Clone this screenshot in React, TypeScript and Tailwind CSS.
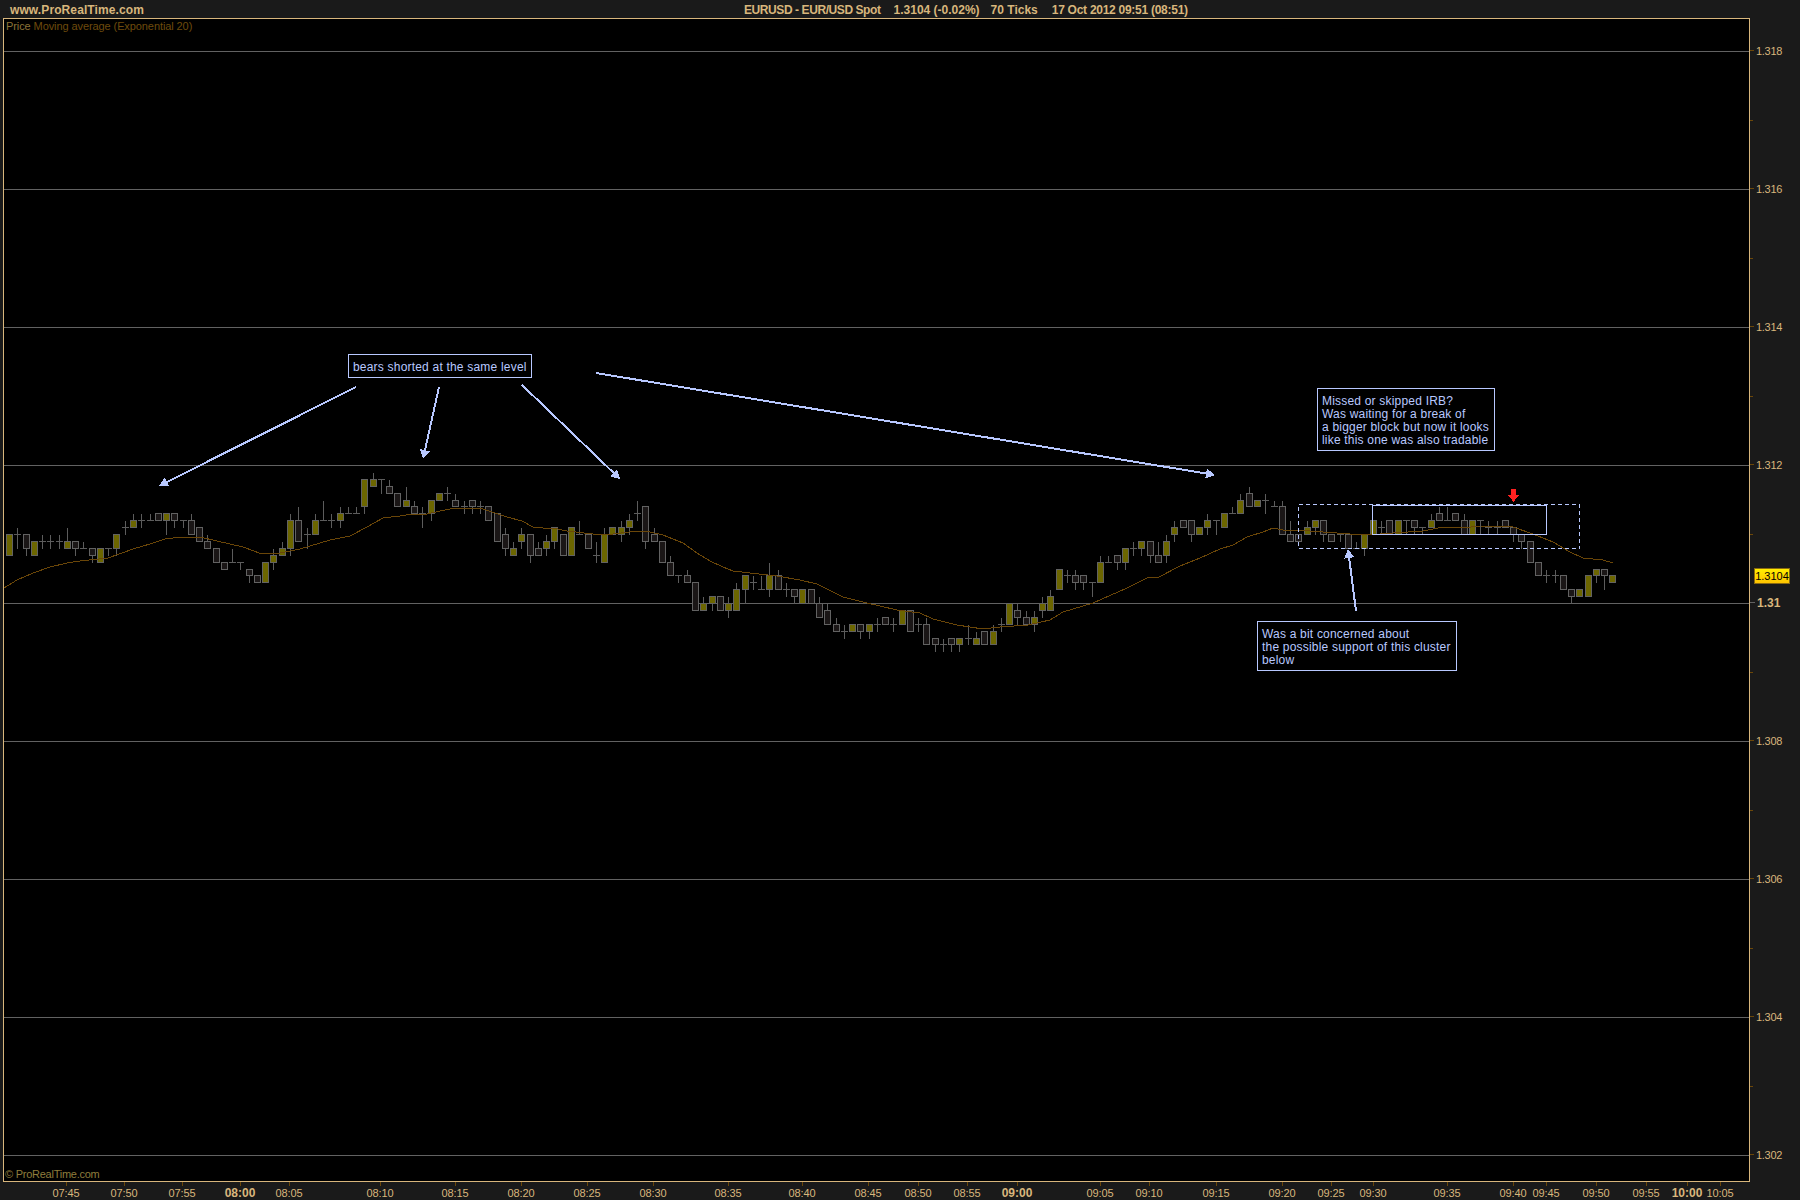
import React from "react";

type C = [number, number, number, number, number];
// [olive?, bodyTop, bodyBottom, high, low] in ticks above 1.3100
const candles: C[] = [
[1,10,7,10,7],[0,10,10,11,8],[0,10,8,10,7],[1,9,7,9,7],[0,9,9,10,8],[0,9,9,10,8],[0,9,9,10,8],[1,9,8,11,8],[0,9,8,9,7],[0,8,8,9,8],
[0,8,7,8,6],[1,8,6,8,6],[0,8,8,8,7],[1,10,8,10,7],[0,11,11,12,10],[1,12,11,13,11],[0,12,12,13,11],[0,12,12,13,12],[0,13,12,13,12],[1,13,12,13,10],
[0,13,12,13,11],[0,12,12,12,11],[0,12,10,13,10],[0,11,9,11,9],[0,9,8,10,8],[0,8,6,8,6],[0,6,5,6,5],[0,6,6,8,6],[0,6,6,6,5],[0,5,4,5,3],
[0,4,3,4,3],[1,6,3,6,3],[1,7,6,8,5],[1,8,7,9,7],[1,12,8,13,7],[0,12,9,14,9],[0,10,10,11,8],[1,12,10,13,10],[0,12,12,15,12],[0,12,12,13,11],
[1,13,12,14,11],[0,13,13,14,13],[0,13,13,14,13],[1,18,14,18,13],[1,18,17,19,17],[0,18,18,18,16],[0,17,16,18,16],[0,16,14,16,14],[1,15,14,17,14],[0,14,13,15,13],
[0,13,13,14,11],[1,15,13,15,12],[1,16,15,16,15],[0,16,16,17,15],[0,15,14,16,14],[0,14,14,15,13],[0,15,14,15,13],[0,14,14,15,13],[0,14,12,14,12],[0,13,9,13,9],
[0,10,8,11,7],[1,8,7,9,7],[1,10,9,11,8],[0,10,7,10,6],[0,8,7,9,7],[1,9,8,10,7],[1,11,9,11,8],[0,10,7,10,7],[1,11,7,11,7],[0,10,10,12,10],
[0,10,8,10,8],[0,7,7,9,6],[1,10,6,11,6],[1,11,10,11,10],[1,11,10,12,9],[1,12,11,13,10],[0,13,13,15,12],[0,14,9,14,8],[0,10,9,11,9],[0,9,6,9,6],
[0,6,4,7,4],[0,4,4,4,3],[0,4,3,5,3],[0,3,-1,3,-1],[1,0,-1,1,-1],[1,1,0,1,-1],[0,1,-1,1,-1],[1,0,-1,1,-2],[1,2,-1,3,-1],[1,4,2,4,0],
[0,3,3,4,2],[0,2,2,4,2],[1,4,2,6,1],[0,4,2,5,2],[0,2,2,3,1],[0,2,1,2,0],[1,2,0,2,0],[0,2,0,2,0],[0,0,-2,1,-2],[0,-1,-3,0,-3],
[0,-3,-4,-2,-4],[0,-4,-4,-3,-5],[1,-3,-4,-3,-4],[0,-3,-4,-3,-5],[1,-3,-4,-3,-5],[0,-3,-3,-2,-4],[0,-2,-3,-2,-3],[0,-3,-3,-2,-4],[1,-1,-3,-1,-3],[0,-1,-4,-1,-4],
[0,-3,-3,-2,-4],[0,-3,-6,-2,-6],[0,-5,-6,-5,-7],[0,-6,-6,-5,-7],[0,-5,-6,-5,-7],[1,-5,-6,-5,-7],[0,-5,-5,-3,-6],[1,-5,-6,-4,-6],[0,-4,-6,-4,-6],[1,-4,-6,-3,-6],
[0,-3,-3,-2,-4],[1,0,-3,0,-3],[0,-1,-2,0,-3],[0,-2,-3,-1,-3],[1,-2,-3,-1,-4],[1,0,-1,1,-2],[1,1,-1,2,-1],[1,5,2,5,2],[0,4,4,5,3],[0,4,3,5,2],
[0,4,3,4,2],[0,3,3,3,1],[1,6,3,7,3],[0,6,6,7,6],[0,7,6,7,5],[1,8,6,8,5],[0,8,8,9,7],[1,9,8,9,7],[0,9,7,9,6],[0,7,6,9,6],
[1,9,7,10,6],[1,11,10,12,9],[0,12,11,12,11],[0,12,10,12,9],[1,11,10,11,10],[1,12,11,13,10],[0,12,12,12,10],[1,13,11,13,11],[0,13,13,14,13],[1,15,13,16,13],
[0,16,14,17,14],[1,15,14,15,14],[0,15,15,16,13],[0,14,14,15,14],[0,14,10,15,10],[0,10,9,12,9],[0,10,9,10,9],[1,11,10,12,10],[1,12,11,12,10],[0,12,10,12,9],
[0,10,9,10,9],[0,10,10,10,9],[0,10,8,10,8],[0,8,8,9,8],[1,10,8,10,7],[1,12,10,12,10],[0,11,11,12,10],[0,12,10,12,10],[1,12,10,12,10],[0,12,12,12,10],
[0,12,11,12,10],[0,11,11,11,10],[1,12,11,13,11],[0,13,12,14,12],[0,12,12,14,12],[0,13,12,13,12],[0,12,10,13,10],[1,12,10,12,10],[0,12,12,12,10],[0,11,11,12,10],
[0,11,11,12,10],[0,12,11,12,11],[0,11,10,11,9],[0,10,9,10,8],[0,9,6,9,6],[0,6,4,6,4],[0,4,4,5,3],[0,4,4,5,3],[0,4,2,4,2],[0,2,1,2,0],
[1,2,1,2,1],[1,4,1,4,1],[1,5,4,5,3],[0,5,4,5,2],[1,4,3,4,3],
];

const ema = "4,588 17,580 33,573 50,567 67,563 80,561 108,558 133,549 150,544 165,539 182,537 200,537 217,541 243,547 262,554 280,553 300,549 330,540 350,536 367,527 383,518 400,516 413,514 427,514 440,511 450,509 480,508 492,512 507,517 522,521 533,527 543,528 553,528 567,531 593,534 613,534 637,531 650,532 663,535 683,543 697,553 710,561 723,567 733,571 750,573 777,576 800,580 817,584 843,597 867,603 897,610 920,613 933,619 957,625 983,629 1000,627 1028,625 1050,620 1063,612 1093,603 1127,588 1147,578 1159,577 1180,566 1200,558 1220,549 1233,545 1247,537 1263,532 1273,528 1283,530 1310,531 1350,534 1367,535 1393,533 1423,531 1443,527 1463,528 1480,526 1513,527 1533,534 1553,542 1570,552 1583,558 1603,560 1613,563";

const y = (l: number) => Math.floor(603.5 - l * 6.9) + 0.5;
const px = (i: number) => Math.round(9 + 8.265 * i) + 0.5;

const grid = [
  { v: "1.318", y: 51.5 }, { v: "1.316", y: 189.5 }, { v: "1.314", y: 327.5 }, { v: "1.312", y: 465.5 },
  { v: "1.31", y: 603.5, bold: true }, { v: "1.308", y: 741.5 }, { v: "1.306", y: 879.5 }, { v: "1.304", y: 1017.5 }, { v: "1.302", y: 1155.5 },
];

const times: [string, number, boolean?][] = [
  ["07:45", 66], ["07:50", 124], ["07:55", 182], ["08:00", 240, true], ["08:05", 289], ["08:10", 380], ["08:15", 455], ["08:20", 521], ["08:25", 587],
  ["08:30", 653], ["08:35", 728], ["08:40", 802], ["08:45", 868], ["08:50", 918], ["08:55", 967], ["09:00", 1017, true], ["09:05", 1100], ["09:10", 1149],
  ["09:15", 1216], ["09:20", 1282], ["09:25", 1331], ["09:30", 1373], ["09:35", 1447], ["09:40", 1513], ["09:45", 1546], ["09:50", 1596], ["09:55", 1646], ["10:00", 1687, true], ["10:05", 1720],
];

const NOTE = "#b8c8ff";

function Arrow({ a, b }: { a: [number, number]; b: [number, number] }) {
  const dx = b[0] - a[0], dy = b[1] - a[1];
  const len = Math.hypot(dx, dy), ux = dx / len, uy = dy / len;
  const bx = b[0] - ux * 9, by = b[1] - uy * 9;
  return (
    <g>
      <line x1={a[0]} y1={a[1]} x2={bx} y2={by} stroke={NOTE} strokeWidth={2} />
      <polygon points={`${b[0]},${b[1]} ${bx - uy * 5},${by + ux * 5} ${bx + uy * 5},${by - ux * 5}`} fill={NOTE} />
    </g>
  );
}

function Chart() {
  return (
    <svg viewBox="4 19 1745 1162" shapeRendering="crispEdges" className="absolute inset-0 block h-[1162px] w-[1745px]">
      {grid.map((g) => <line key={g.v} x1={4} x2={1749} y1={g.y} y2={g.y} stroke="#626262" />)}
      {candles.map((c, i) => {
        const x = px(i);
        const [g, t, b, h, l] = c;
        return (
          <g key={i}>
            <line x1={x} x2={x} y1={y(h)} y2={y(l)} stroke="#5c5c5c" />
            {t === b ? (
              <line x1={x - 3.5} x2={x + 3.5} y1={y(t)} y2={y(t)} stroke="#5c5c5c" />
            ) : (
              <rect x={x - 3} y={y(t)} width={6} height={y(b) - y(t)} fill={g ? "#6c6600" : "#1a1616"} stroke="#626262" />
            )}
          </g>
        );
      })}
      <polyline points={ema} fill="none" stroke="#6a4608" strokeWidth={1} />
      <rect x={1298.5} y={504.5} width={281} height={44} fill="none" stroke={NOTE} strokeDasharray="4 3" />
      <rect x={1372.5} y={505.5} width={174} height={29} fill="none" stroke={NOTE} />
      <Arrow a={[356, 387]} b={[159, 486]} />
      <Arrow a={[439, 387]} b={[423, 459]} />
      <Arrow a={[522, 385]} b={[620, 479]} />
      <Arrow a={[596, 373]} b={[1215, 475]} />
      <Arrow a={[1356, 611]} b={[1348, 549]} />
      <polygon points="1511,489 1516,489 1516,495 1519,495 1513.5,502 1508,495 1511,495" fill="#ff2020" />
    </svg>
  );
}

function Note({ className, lines }: { className: string; lines: string[] }) {
  return (
    <div className={`absolute border border-[#b8c8ff] bg-black text-[12px] leading-[13px] tracking-[0.2px] whitespace-pre text-[#b8c8ff] ${className}`}>
      {lines.map((l) => <div key={l}>{l}</div>)}
    </div>
  );
}

export default function App() {
  return (
    <div className="flex h-[1200px] w-[1800px] flex-col overflow-hidden bg-[#1a1a1a] font-['Liberation_Sans',Arial,sans-serif] text-[11px] text-[#d8b67c]">
      <div className="flex h-[18px] items-center pt-[1px] text-[12px] font-bold whitespace-pre">
        <span className="w-[744px] pl-[10px] tracking-[0.1px]">www.ProRealTime.com</span>
        <span className="tracking-[-0.42px]">EURUSD - EUR/USD Spot</span>
        <span className="ml-[13px]">1.3104 (-0.02%)</span>
        <span className="ml-[11px]">70 Ticks</span>
        <span className="ml-[14px] tracking-[-0.27px]">17 Oct 2012 09:51 (08:51)</span>
      </div>
      <div className="flex h-[1164px]">
        <div className="relative ml-[3px] h-[1164px] w-[1747px] border border-[#d8b67c] bg-black">
          <Chart />
          <div className="absolute top-[1px] left-[2px] leading-[13px] tracking-[-0.09px] whitespace-pre">
            <span className="text-[#8c7437]">Price </span>
            <span className="text-[#6e4b0c]">Moving average (Exponential 20)</span>
          </div>
          <div className="absolute bottom-[0px] left-[1px] leading-[13px] tracking-[-0.25px] text-[#8f7d3c]">© ProRealTime.com</div>
          <Note className="top-[335px] left-[344px] h-[24px] w-[184px] px-[4px] pt-[6px]" lines={["bears shorted at the same level"]} />
          <Note className="top-[369px] left-[1313px] h-[63px] w-[178px] px-[4px] pt-[6px]" lines={["Missed or skipped IRB?", "Was waiting for a break of", "a bigger block but now it looks", "like this one was also tradable"]} />
          <Note className="top-[602px] left-[1253px] h-[50px] w-[200px] px-[4px] pt-[6px]" lines={["Was a bit concerned about", "the possible support of this cluster", "below"]} />
        </div>
        <div className="relative w-[50px]">
          {grid.map((g) => (
            <div key={g.v} className="absolute left-0 flex items-center" style={{ top: g.y - 18 - 8 }}>
              <span className={`h-px ${g.bold ? "w-[5px] bg-[#626262]" : "w-[4px] bg-[#6a4608]"}`} />
              <span className={`ml-[2px] leading-[14px] ${g.bold ? "text-[12px] font-bold" : "tracking-[-0.3px]"}`}>{g.v}</span>
            </div>
          ))}
          {grid.slice(0, 8).map((g) => (
            <span key={g.v} className="absolute left-0 h-px w-[3px] bg-[#6a4608]" style={{ top: g.y - 18 + 69 - 0.5 }} />
          ))}
          <div className="absolute top-[550px] left-[4px] flex h-[16px] w-[36px] items-center justify-center border border-[#8a6a10] bg-linear-to-b from-[#ffee00] to-[#ffc400] leading-[14px] text-black">1.3104</div>
        </div>
      </div>
      <div className="relative flex-1">
        {times.map(([t, x, bold]) => (
          <div key={t} className="absolute top-0 flex w-[40px] flex-col items-center" style={{ left: x - 20 }}>
            <span className="h-[4px] w-px bg-[#6a4608]" />
            <span className={`leading-[14px] ${bold ? "text-[12px] font-bold" : "tracking-[-0.1px]"}`}>{t}</span>
          </div>
        ))}
      </div>
    </div>
  );
}
